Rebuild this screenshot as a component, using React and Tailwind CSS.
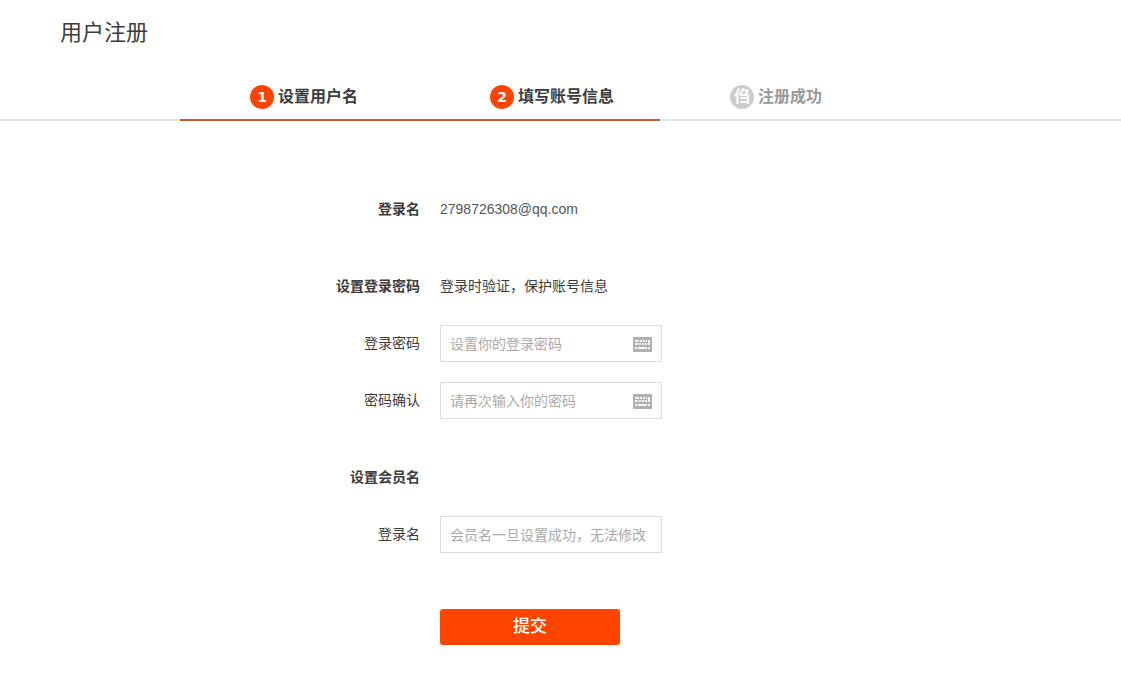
import React, { useState } from "react";

const steps = [
    { mark: "1", title: "设置用户名", active: true },
    { mark: "2", title: "填写账号信息", active: true },
    { mark: "㑇", title: "注册成功", active: false },
];

function KeyboardIcon() {
    return (
        <svg width="19" height="15" viewBox="0 0 19 15" className="mt-px" shapeRendering="crispEdges" aria-hidden="true">
            <rect width="19" height="15" rx="1" fill="#b0b0b0" />
            <path
                d="M2 3h4v2H2zM7 3h2v2H7zM10 3h2v2h-2zM13 3h1v2h-1zM15 3h2v4h-2zM2 6h3v2H2zM6 6h2v2H6zM9 6h2v2H9zM12 6h2v2h-2zM15 7h2v1h-2zM2 10h2v2H2zM5 10h9v2H5zM15 10h2v2h-2z"
                fill="#f4f4f4"
            />
        </svg>
    );
}

function Row({ label, htmlFor, strong, children }) {
    const style = strong ? "font-bold" : "font-normal";
    return (
        <div className="flex items-start gap-5 h-[37px]">
            {htmlFor ? (
                <label htmlFor={htmlFor} className={`w-[360px] shrink-0 pt-2 text-right ${style}`}>
                    {label}
                </label>
            ) : (
                <span className={`w-[360px] shrink-0 pt-2 text-right ${style}`}>{label}</span>
            )}
            {children}
        </div>
    );
}

function Field({ id, type = "text", placeholder, value, onChange, keyboard }) {
    return (
        <div className="flex items-center w-[222px] h-[37px] border border-[#dddddd] px-[9px] focus-within:border-[#ff4400]">
            <input
                id={id}
                type={type}
                placeholder={placeholder}
                className="flex-1 min-w-0 text-[14px] leading-5 text-[#3c3c3c] outline-none placeholder:text-[#aaaaaa]"
                value={value}
                onChange={(e) => onChange(e.target.value)}
                required
            />
            {keyboard && <KeyboardIcon />}
        </div>
    );
}

function App() {
    const [password, setPassword] = useState("");
    const [confirm, setConfirm] = useState("");
    const [nickname, setNickname] = useState("");

    return (
        <div className="bg-white text-[14px] leading-5 text-[#3c3c3c] font-['Liberation_Sans','Noto_Sans_CJK_SC',sans-serif]">
            <header className="w-full max-w-[1001px] mx-auto pt-[17px]">
                <h1 className="text-[22px] leading-8">用户注册</h1>
            </header>

            <div className="border-b-2 border-[#e5e5e5] mt-[26px]">
                <ol className="flex w-full max-w-[1001px] mx-auto pl-[120px] -mb-0.5">
                    {steps.map((step) => (
                        <li
                            key={step.title}
                            className={`flex items-center gap-1 w-60 h-[46px] pl-[70px] border-b-2 text-[16px] leading-6 font-bold ${
                                step.active ? "border-[#c85a35]" : "border-[#e5e5e5] text-[#999999]"
                            }`}
                        >
                            <span
                                className={`flex items-center justify-center size-6 rounded-full text-white font-['DejaVu_Sans','Noto_Sans_CJK_SC',sans-serif] ${
                                    step.active ? "bg-[#ff4400] text-[14px]" : "bg-[#cccccc]"
                                }`}
                            >
                                {step.mark}
                            </span>
                            <span>{step.title}</span>
                        </li>
                    ))}
                </ol>
            </div>

            <form onSubmit={(e) => e.preventDefault()} className="w-full max-w-[1001px] mx-auto pt-[70px] pb-8">
                <div className="flex flex-col gap-10">
                    <Row label="登录名" strong>
                        <span className="pt-2 text-[#555555]">2798726308@qq.com</span>
                    </Row>

                    <div className="flex flex-col gap-5">
                        <Row label="设置登录密码" strong>
                            <span className="pt-2">登录时验证，保护账号信息</span>
                        </Row>
                        <Row label="登录密码" htmlFor="password">
                            <Field
                                id="password"
                                type="password"
                                placeholder="设置你的登录密码"
                                value={password}
                                onChange={setPassword}
                                keyboard
                            />
                        </Row>
                        <Row label="密码确认" htmlFor="confirm">
                            <Field
                                id="confirm"
                                type="password"
                                placeholder="请再次输入你的密码"
                                value={confirm}
                                onChange={setConfirm}
                                keyboard
                            />
                        </Row>
                    </div>

                    <div className="flex flex-col gap-5">
                        <Row label="设置会员名" strong />
                        <Row label="登录名" htmlFor="nickname">
                            <Field
                                id="nickname"
                                placeholder="会员名一旦设置成功，无法修改"
                                value={nickname}
                                onChange={setNickname}
                            />
                        </Row>
                    </div>
                </div>

                <button
                    type="submit"
                    className="block w-[180px] h-9 mt-14 ml-[380px] rounded-[3px] bg-[#ff4400] text-white text-[17px] font-medium cursor-pointer"
                >
                    提交
                </button>
            </form>
        </div>
    );
}

export default App;
